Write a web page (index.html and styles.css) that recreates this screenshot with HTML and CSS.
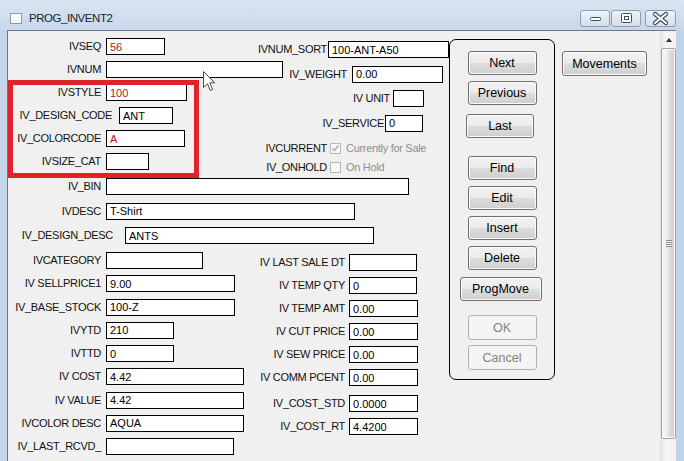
FILE: index.html
```html
<!DOCTYPE html>
<html>
<head>
<meta charset="utf-8">
<title>PROG_INVENT2</title>
<link rel="stylesheet" href="styles.css">
</head>
<body>
<div class="window">
  <div class="titlebar">
    <span class="app-icon"></span>
    <span class="title">PROG_INVENT2</span>
    <div class="caption-btns">
      <span class="cap cap-min"><svg width="29" height="17" viewBox="0 0 29 17"><rect x="9.5" y="7.5" width="10" height="3" rx="1" fill="#fff" stroke="#3d4b5f"/></svg></span>
      <span class="cap cap-max"><svg width="29" height="17" viewBox="0 0 29 17"><rect x="9.5" y="3.5" width="10" height="9" rx="1" fill="#fff" stroke="#3d4b5f"/><rect x="12.5" y="6.5" width="4" height="3" fill="#fff" stroke="#3d4b5f"/></svg></span>
      <span class="cap cap-close"><svg width="31" height="17" viewBox="0 0 31 17"><path d="M10 4 L21 13 M21 4 L10 13" stroke="#3d4b5f" stroke-width="4.2" stroke-linecap="round"/><path d="M10 4 L21 13 M21 4 L10 13" stroke="#fff" stroke-width="2" stroke-linecap="round"/></svg></span>
    </div>
  </div>
  <div class="frame">
    <div class="client">
      <div class="form">
        <div class="fields">
          <div class="sec1">
            <div class="left1">
              <div class="row"><span class="lbl">IVSEQ</span><input class="fld w59 red" value="56" readonly></div>
              <div class="row"><span class="lbl">IVNUM</span><input class="fld w177" value="" readonly></div>
              <div class="row"><span class="lbl">IVSTYLE</span><input class="fld w81 red" value="100" readonly></div>
              <div class="row row-dc"><span class="lbl">IV_DESIGN_CODE</span><input class="fld w54" value="ANT" readonly></div>
              <div class="row"><span class="lbl">IV_COLORCODE</span><input class="fld w79 red" value="A" readonly></div>
              <div class="row"><span class="lbl">IVSIZE_CAT</span><input class="fld w43" value="" readonly></div>
            </div>
            <div class="mid1">
              <div class="row"><span class="lbl l69 tight">IVNUM_SORT</span><input class="fld w121" value="100-ANT-A50" readonly></div>
              <div class="row"><span class="lbl l89">IV_WEIGHT</span><input class="fld w91" value="0.00" readonly></div>
              <div class="row"><span class="lbl l132 g3">IV UNIT</span><input class="fld w31" value="" readonly></div>
              <div class="row"><span class="lbl l126 tight">IV_SERVICE</span><input class="fld w38" value="0" readonly></div>
              <div class="row chkrow chk1"><span class="lbl l69 g3">IVCURRENT</span><span class="chk"><svg width="11" height="11" viewBox="0 0 11 11"><path d="M2.5 5.5 L4.5 7.5 L8.5 2.5" fill="none" stroke="#a9a9a9" stroke-width="1.4"/></svg></span><span class="chktext">Currently for Sale</span></div>
              <div class="row chkrow chk2"><span class="lbl l69 g3">IV_ONHOLD</span><span class="chk"></span><span class="chktext">On Hold</span></div>
            </div>
          </div>
          <div class="sec2">
            <div class="row"><span class="lbl">IV_BIN</span><input class="fld w303" value="" readonly></div>
            <div class="row"><span class="lbl">IVDESC</span><input class="fld w249" value="T-Shirt" readonly></div>
            <div class="row row-dd"><span class="lbl">IV_DESIGN_DESC</span><input class="fld w249" value="ANTS" readonly></div>
          </div>
          <div class="sec3">
            <div class="left3">
              <div class="row"><span class="lbl">IVCATEGORY</span><input class="fld w97" value="" readonly></div>
              <div class="row"><span class="lbl">IV SELLPRICE1</span><input class="fld w129" value="9.00" readonly></div>
              <div class="row"><span class="lbl">IV_BASE_STOCK</span><input class="fld w129" value="100-Z" readonly></div>
              <div class="row"><span class="lbl">IVYTD</span><input class="fld w68" value="210" readonly></div>
              <div class="row"><span class="lbl">IVTTD</span><input class="fld w68" value="0" readonly></div>
              <div class="row"><span class="lbl">IV COST</span><input class="fld w138" value="4.42" readonly></div>
              <div class="row"><span class="lbl">IV VALUE</span><input class="fld w138" value="4.42" readonly></div>
              <div class="row"><span class="lbl">IVCOLOR DESC</span><input class="fld w138" value="AQUA" readonly></div>
              <div class="row"><span class="lbl">IV_LAST_RCVD_</span><input class="fld w128" value="" readonly></div>
            </div>
            <div class="right3">
              <div class="row"><span class="lbl">IV LAST SALE DT</span><input class="fld w68 nudge" value="" readonly></div>
              <div class="row"><span class="lbl">IV TEMP QTY</span><input class="fld w68 nudge" value="0" readonly></div>
              <div class="row"><span class="lbl">IV TEMP AMT</span><input class="fld w69" value="0.00" readonly></div>
              <div class="row"><span class="lbl">IV CUT PRICE</span><input class="fld w69" value="0.00" readonly></div>
              <div class="row"><span class="lbl">IV SEW PRICE</span><input class="fld w69" value="0.00" readonly></div>
              <div class="row"><span class="lbl">IV COMM PCENT</span><input class="fld w69" value="0.00" readonly></div>
              <div class="row cost-std"><span class="lbl">IV_COST_STD</span><input class="fld w69" value="0.0000" readonly></div>
              <div class="row"><span class="lbl">IV_COST_RT</span><input class="fld w69" value="4.4200" readonly></div>
            </div>
          </div>
        </div>
        <div class="navpanel">
          <button class="btn nav">Next</button>
          <button class="btn nav">Previous</button>
          <button class="btn nav last">Last</button>
          <button class="btn nav find">Find</button>
          <button class="btn nav">Edit</button>
          <button class="btn nav">Insert</button>
          <button class="btn nav">Delete</button>
          <button class="btn progmove">ProgMove</button>
          <button class="btn nav ok" disabled>OK</button>
          <button class="btn nav cancel" disabled>Cancel</button>
        </div>
        <button class="btn movements">Movements</button>
        <div class="highlight"></div>
        <svg class="cursor" width="13" height="21" viewBox="0 0 13 21"><path d="M0.5 0.5 L0.5 16.5 L4.5 12.8 L7.3 19.5 L9.6 18.5 L6.8 11.8 L11.8 11.8 Z" fill="#fff" stroke="#4a4a4a"/></svg>
      </div>
      <div class="vscroll">
        <div class="sb-up"><span class="sb-arrow"></span></div>
        <div class="sb-thumb"><span class="grip"></span></div>
        <div class="sb-track"></div>
      </div>
    </div>
  </div>
</div>
</body>
</html>
```
FILE: styles.css
```css
html, body {
  margin: 0;
  padding: 0;
}
body {
  width: 684px;
  height: 461px;
  overflow: hidden;
  background: #c3d4e9;
  font-family: "Liberation Sans", Arial, sans-serif;
  font-size: 11px;
  letter-spacing: -0.3px;
  color: #000;
}
.window {
  display: flex;
  flex-direction: column;
  height: 461px;
}

/* title bar */
.titlebar {
  height: 30px;
  flex: none;
  display: flex;
  align-items: flex-start;
  padding-left: 10px;
  background: linear-gradient(#dae5f2, #c7d7ea);
}
.app-icon {
  width: 12px;
  height: 11px;
  margin-top: 13px;
  box-sizing: border-box;
  border: 1px solid #8a9bb0;
  background: linear-gradient(#ffffff, #f3f6fa);
}
.title {
  margin-left: 7px;
  margin-top: 10px;
  line-height: 16px;
  font-size: 11.5px;
  letter-spacing: -0.45px;
  color: #222;
}
.caption-btns {
  margin-left: auto;
  margin-right: 8px;
  margin-top: 10px;
  display: flex;
}
.cap {
  height: 17px;
  box-sizing: border-box;
  border: 1px solid #8b9db4;
  border-radius: 3px;
  background: linear-gradient(#ecf2f9, #d3dfed);
  display: flex;
  align-items: center;
  justify-content: center;
  overflow: hidden;
}
.cap svg { display: block; flex: none; }
.cap-min { width: 30px; }
.cap-max { width: 30px; margin-left: 1px; }
.cap-close { width: 31px; margin-left: 4px; }

/* frame & client */
.frame {
  flex: 1;
  display: flex;
  padding: 0 8px 0 7px;
  min-height: 0;
}
.client {
  flex: 1;
  display: flex;
  border-top: 1px solid #6e7886;
  border-left: 1px solid #6e7886;
  background: #f0f0f0;
  min-height: 0;
}
.form {
  flex: 1;
  position: relative;
  display: flex;
  align-items: flex-start;
}

/* fields */
.fields {
  width: 441px;
  flex: none;
  padding-top: 7px;
}
.sec1 {
  display: flex;
  height: 140px;
}
.left1 {
  width: 250px;
  flex: none;
  display: flex;
  flex-direction: column;
  gap: 5px;
}
.mid1 {
  display: flex;
  flex-direction: column;
  gap: 6.5px;
  padding-top: 3px;
}
.sec2 {
  display: flex;
  flex-direction: column;
  gap: 6.5px;
}
.sec3 {
  display: flex;
  margin-top: 7px;
}
.left3 {
  width: 242px;
  flex: none;
  display: flex;
  flex-direction: column;
  gap: 5.25px;
}
.right3 {
  display: flex;
  flex-direction: column;
  gap: 5px;
  padding-top: 2px;
}
.row {
  display: flex;
  align-items: flex-start;
  height: 18px;
  flex: none;
}
.lbl {
  flex: none;
  text-align: right;
  white-space: nowrap;
  line-height: 17px;
  margin-right: 5px;
  color: #111;
}
.left1 .lbl, .sec2 .lbl, .left3 .lbl { width: 93px; }
.row-dc .lbl { width: 104px; margin-right: 7px; }
.row-dd .lbl { width: 105px; margin-right: 12px; }
.right3 .lbl { width: 95px; margin-right: 4px; }
.nudge { margin-left: 1px; }
.cost-std { margin-top: 3px; }

.l69 { width: 69px; }
.l89 { width: 89px; }
.l132 { width: 132px; }
.l126 { width: 126px; }
.lbl.tight { margin-right: 1px; }
.lbl.g3 { margin-right: 3px; }

.fld {
  box-sizing: border-box;
  height: 17px;
  margin: 0;
  border: 1px solid #000;
  background: #fff;
  padding: 0 3px;
  font-family: "Liberation Sans", Arial, sans-serif;
  font-size: 11px;
  letter-spacing: 0;
  color: #000;
  outline: none;
  flex: none;
}
.fld.red { color: #a01c1c; }
.w31 { width: 31px; }
.w38 { width: 38px; }
.w43 { width: 43px; }
.w54 { width: 54px; }
.w59 { width: 59px; }
.w68 { width: 68px; }
.w69 { width: 69px; }
.w79 { width: 79px; }
.w81 { width: 81px; }
.w91 { width: 91px; }
.w97 { width: 97px; }
.w121 { width: 121px; }
.w128 { width: 128px; }
.w129 { width: 129px; }
.w138 { width: 138px; }
.w177 { width: 177px; }
.w249 { width: 249px; }
.w303 { width: 303px; }

/* checkbox rows */
.chkrow {
  height: 16px;
  align-items: center;
}
.chkrow .lbl { line-height: 16px; }
.chk1 { margin-top: 1px; }
.chk2 { margin-top: -3.5px; }
.chk {
  width: 11px;
  height: 11px;
  box-sizing: border-box;
  border: 1px solid #b8b8b8;
  background: #f6f6f6;
  flex: none;
  display: flex;
}
.chk svg { display: block; margin: -1px; }
.chktext {
  margin-left: 5px;
  color: #8f8f8f;
  white-space: nowrap;
}

/* button panel */
.navpanel {
  width: 106px;
  height: 341px;
  box-sizing: border-box;
  margin-top: 8px;
  border: 1px solid #000;
  border-radius: 7px;
  flex: none;
  display: flex;
  flex-direction: column;
  align-items: center;
  padding-top: 11px;
}
.btn {
  box-sizing: border-box;
  height: 24px;
  margin: 0;
  padding: 0;
  border: 1px solid #707070;
  border-radius: 3px;
  background: linear-gradient(#f2f2f2 0%, #ebebeb 50%, #dddddd 50%, #cfcfcf 100%);
  box-shadow: inset 0 0 0 1px #fbfbfb;
  font-family: "Liberation Sans", Arial, sans-serif;
  font-size: 12.5px;
  letter-spacing: 0;
  color: #000;
  flex: none;
}
.btn:disabled {
  background: #f4f4f4;
  border-color: #adb2b5;
  box-shadow: none;
  color: #838383;
}
.nav { width: 69px; }
.nav + .btn, .btn + .nav { margin-top: 6px; }
.navpanel .last { width: 68px; margin-top: 9px; margin-right: 4px; }
.navpanel .find { margin-top: 18px; }
.navpanel .progmove { width: 82px; margin-top: 7px; margin-right: 3px; }
.navpanel .ok { margin-top: 14px; height: 25px; }
.navpanel .cancel { margin-top: 5px; height: 25px; }
.movements {
  width: 85px;
  height: 25px;
  margin-left: 7px;
  margin-top: 20px;
}

/* overlays */
.highlight {
  position: absolute;
  left: 0;
  top: 49px;
  width: 191px;
  height: 98px;
  box-sizing: border-box;
  border: 5px solid #e2222b;
  pointer-events: none;
}
.cursor {
  position: absolute;
  left: 195px;
  top: 40px;
}

/* scrollbar */
.vscroll {
  width: 16px;
  flex: none;
  display: flex;
  flex-direction: column;
  background: linear-gradient(to right, #e6e6e6, #f3f3f3 30%, #f3f3f3);
  border-left: 1px solid #e0e0e0;
  box-sizing: border-box;
}
.sb-up {
  height: 17px;
  flex: none;
  display: flex;
  align-items: center;
  justify-content: center;
}
.sb-arrow {
  width: 0;
  height: 0;
  border-left: 3.5px solid transparent;
  border-right: 3.5px solid transparent;
  border-bottom: 4px solid #333;
}
.sb-thumb {
  height: 391px;
  flex: none;
  box-sizing: border-box;
  border: 1px solid #a2a2a2;
  border-radius: 2px;
  background: linear-gradient(to right, #f6f6f6 0%, #ececec 45%, #dcdcdc 55%, #d2d2d2 100%);
  box-shadow: inset 0 0 0 1px #f8f8f8;
  display: flex;
  align-items: center;
  justify-content: center;
}
.grip {
  width: 6px;
  height: 7px;
  background: repeating-linear-gradient(#8a8a8a 0 1px, #f4f4f4 1px 2px);
}
.sb-track { flex: 1; }
```
